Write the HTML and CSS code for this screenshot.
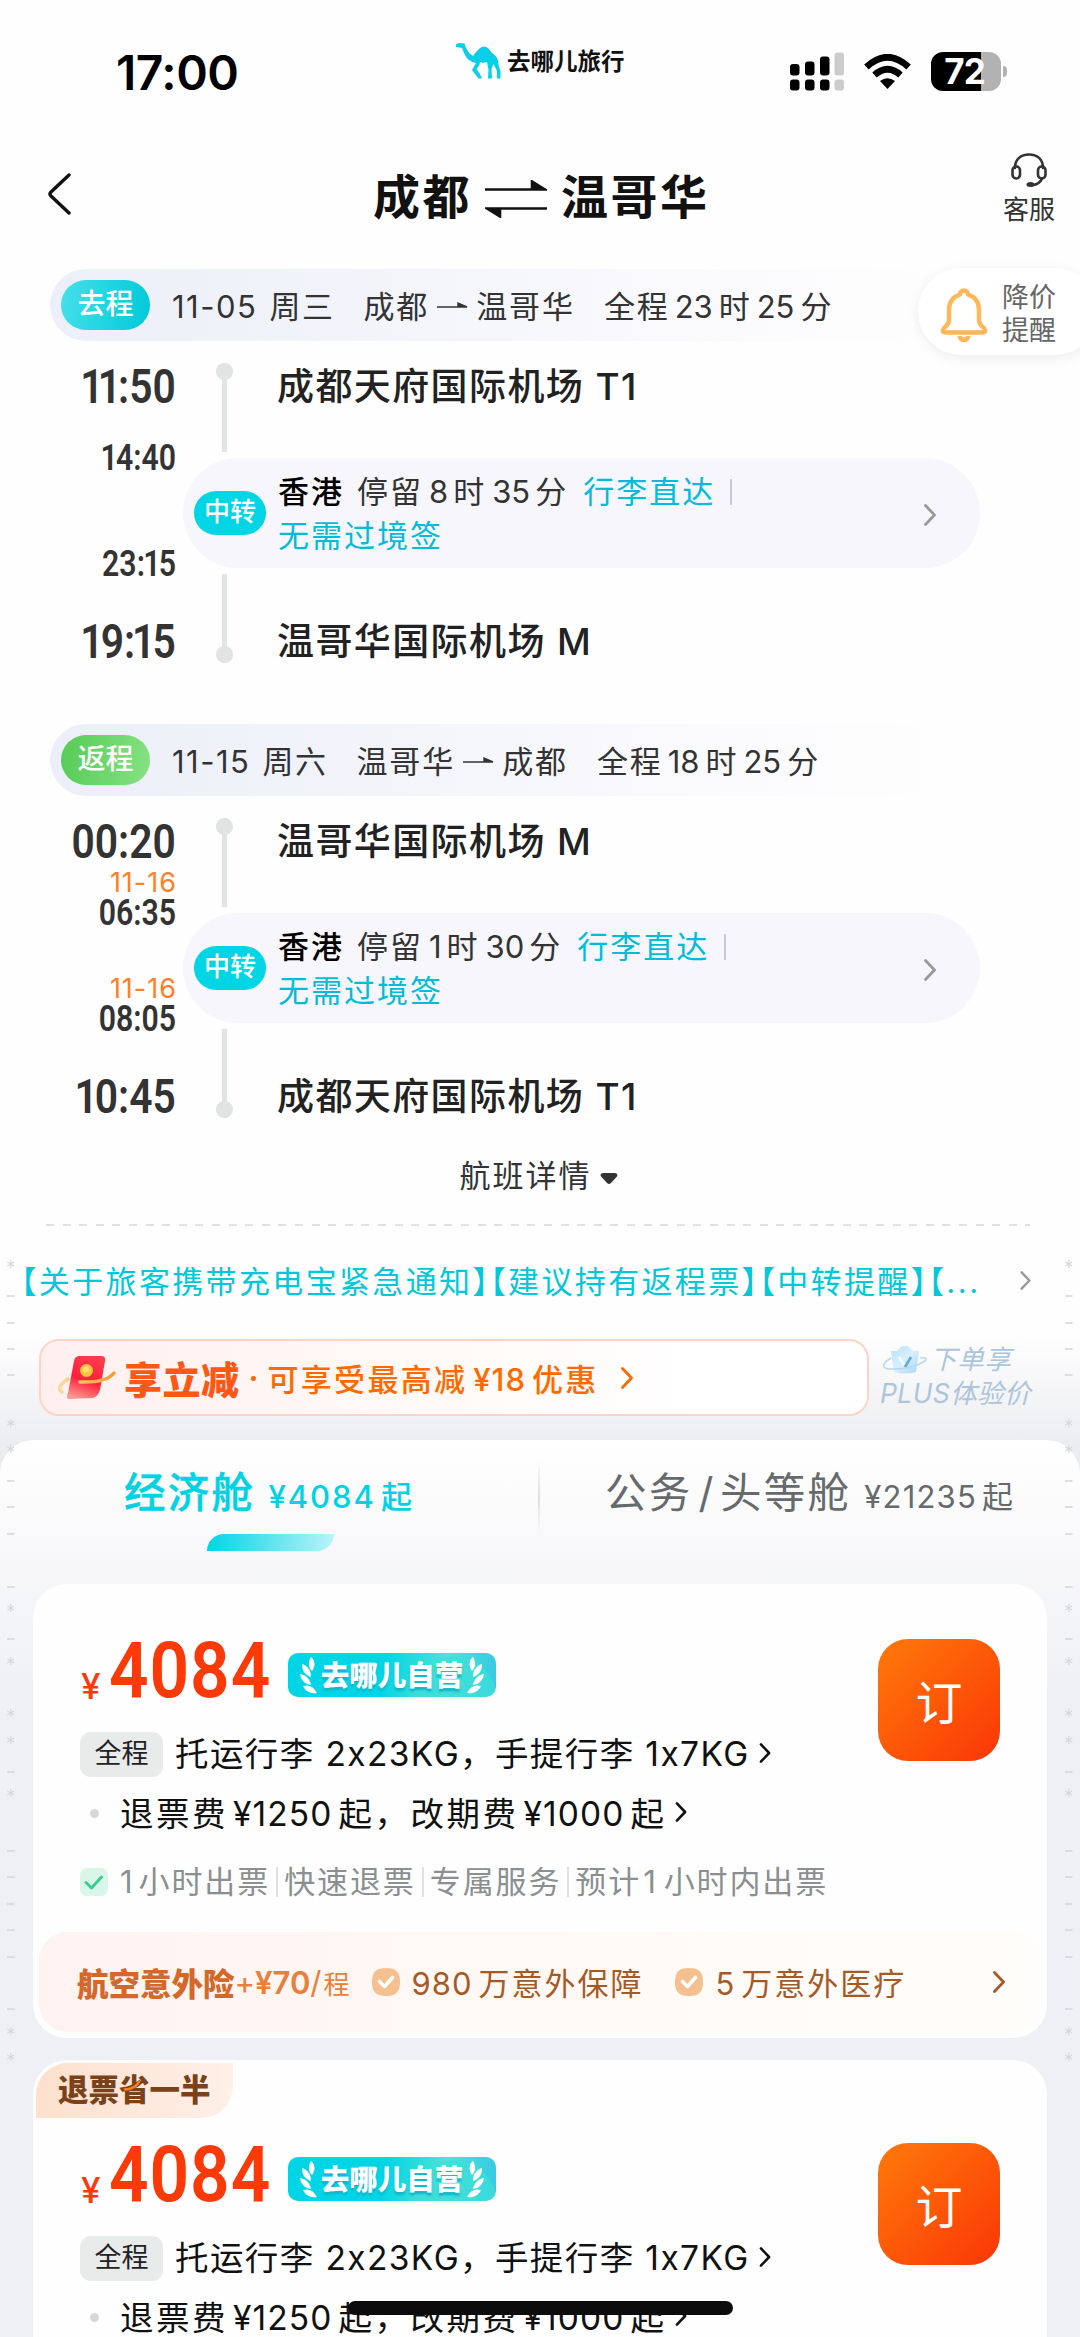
FILE: index.html
```html
<!DOCTYPE html>
<html lang="zh-CN">
<head>
<meta charset="utf-8">
<title>成都 温哥华 航班</title>
<link rel="stylesheet" href="styles.css">
</head>
<body>
<svg class="defs" width="0" height="0" aria-hidden="true">
  <defs>
    <symbol id="chev" viewBox="0 0 12 22"><path d="M1.5 1.5 10.5 11 1.5 20.5" fill="none" stroke="currentColor" stroke-width="2.8" stroke-linecap="round" stroke-linejoin="round"/></symbol>
    <symbol id="arrow" viewBox="0 0 32 10"><path d="M0 7H30L21 3V7" fill="currentColor" stroke="currentColor" stroke-width="1.4"/></symbol>
    <symbol id="laurel" viewBox="0 0 18 38"><g fill="#fff"><path d="M11 1c5 4 4 10 1 14-4-4-4-9-1-14z"/><path d="M2 8c6 2 9 6 9 13-6-2-9-6-9-13z"/><path d="M0 18c6 1 10 5 11 11-6-1-10-4-11-11z"/><path d="M3 30c6-2 11 1 14 7-6 1-11-1-14-7z"/></g></symbol>
    <symbol id="okround" viewBox="0 0 28 28"><path d="M14 0C24 0 28 4 28 14s-4 14-14 14S0 24 0 14 4 0 14 0z" fill="#f5c090"/><path d="M7.5 13.5 12.5 18.5 20.5 9.5" fill="none" stroke="#fff" stroke-width="3.6" stroke-linecap="round" stroke-linejoin="round"/></symbol>
    <symbol id="dash" viewBox="0 0 8 10"><path d="M0 5h7.5" stroke="#d6d8da" stroke-width="1.6"/></symbol>
    <symbol id="star" viewBox="0 0 8 10"><path d="M3.8 1v8M.4 3l6.8 4M.4 7l6.8-4" stroke="#d6d8da" stroke-width="1.2"/></symbol>
    <g id="marks">
      <use href="#star" x="0" y="0" width="8" height="10"/><use href="#dash" y="32" width="8" height="10"/><use href="#dash" y="59" width="8" height="10"/><use href="#dash" y="85" width="8" height="10"/><use href="#dash" y="111" width="8" height="10"/>
      <use href="#star" y="159" width="8" height="10"/><use href="#star" y="185" width="8" height="10"/><use href="#dash" y="217" width="8" height="10"/><use href="#dash" y="243" width="8" height="10"/><use href="#dash" y="270" width="8" height="10"/>
      <use href="#dash" y="323" width="8" height="10"/><use href="#star" y="344" width="8" height="10"/><use href="#dash" y="375" width="8" height="10"/><use href="#star" y="397" width="8" height="10"/><use href="#star" y="449" width="8" height="10"/><use href="#star" y="476" width="8" height="10"/><use href="#dash" y="508" width="8" height="10"/><use href="#star" y="529" width="8" height="10"/>
      <use href="#dash" y="587" width="8" height="10"/><use href="#dash" y="613" width="8" height="10"/><use href="#dash" y="640" width="8" height="10"/><use href="#dash" y="666" width="8" height="10"/><use href="#dash" y="693" width="8" height="10"/><use href="#dash" y="745" width="8" height="10"/><use href="#star" y="767" width="8" height="10"/><use href="#star" y="793" width="8" height="10"/>
    </g>
    <linearGradient id="env" x1="0.6" y1="0" x2="0.3" y2="1"><stop offset="0" stop-color="#ff3a4c"/><stop offset=".55" stop-color="#ff1f3c"/><stop offset="1" stop-color="#ff9a92"/></linearGradient>
    <linearGradient id="ring" x1="0" x2="1"><stop offset="0" stop-color="#ffd9a0"/><stop offset="1" stop-color="#f39a2e"/></linearGradient>
    <linearGradient id="crown" x1="0" x2="1" y2="1"><stop offset="0" stop-color="#b5e0fa"/><stop offset=".5" stop-color="#d9f0fd"/><stop offset="1" stop-color="#a9d4f6"/></linearGradient>
  </defs>
</svg>

<main class="screen">
  <header class="status">
    <span class="clock">17:00</span>
    <span class="brand">
      <svg class="camel" viewBox="0 0 46 36"><path fill="#08cfe8" d="M1 1.500 4 0 9.500 .500 10.500 4 14 10 18 13 21 9 25 5Q29 2 33 5L37 10Q42 13 43 18L44 24 45.500 28 45.500 35.500 42 35.500 42 28 38.500 21 36.500 26 37 35.500 33 35.500 33.500 27 32 19Q28 20.500 25 19L24.500 22 21.500 26 25 31 27 35.500 23.500 35.500 17 27 21 20Q13 18.500 10 12L7 5 1 4z"/></svg>
      <span class="brand-name">去哪儿旅行</span>
    </span>
    <span class="indicators">
      <svg class="signal" viewBox="0 0 54 38"><g fill="#000"><rect y="11.500" width="9.500" height="11.500" rx="3"/><rect x="15" y="9" width="9.500" height="14" rx="3"/><rect x="30" y="4" width="9.500" height="19" rx="3"/><rect y="27" width="9.500" height="11" rx="3"/><rect x="15" y="27" width="9.500" height="11" rx="3"/><rect x="30" y="27" width="9.500" height="11" rx="3"/></g><g fill="#ccc"><rect x="44.500" width="9.500" height="23" rx="3"/><rect x="44.500" y="27" width="9.500" height="11" rx="3"/></g></svg>
      <svg class="wifi" viewBox="0 0 47 35"><g fill="none" stroke="#000" stroke-width="6.600"><path d="M2.400 13Q23.500-6.500 44.600 13"/><path d="M10.500 21Q23.500 9.500 36.500 21"/></g><path d="M16 27Q23.500 21.500 31 27L23.500 35z"/></svg>
      <span class="battery">72</span>
    </span>
  </header>

  <nav class="titlebar">
    <svg class="back" viewBox="0 0 24 42"><path d="M22 2 4 19Q2 21 4 23L22 40" fill="none" stroke="#111" stroke-width="3.400" stroke-linecap="round"/></svg>
    <h1 class="route"><span>成都</span><svg viewBox="0 0 62 38"><path d="M0 9.500H60L47 1.500V9M62 28.500H2L15 36.500V29" fill="#111" stroke="#111" stroke-width="2.600"/></svg><span>温哥华</span></h1>
    <span class="service">
      <svg viewBox="0 0 36 34"><g fill="none" stroke="#333" stroke-width="2.600" stroke-linecap="round"><path d="M4 15C4 6 10 1.500 18 1.500S32 6 32 15"/><rect x="1.500" y="13.500" width="7.500" height="12" rx="3.700"/><rect x="27" y="13.500" width="7.500" height="12" rx="3.700"/><path d="M31 25.500Q29 31 21 32.300"/></g><ellipse cx="19.500" cy="31.500" rx="4" ry="2.500" fill="#333"/></svg>
      <span>客服</span>
    </span>
  </nav>

  <aside class="remind">
    <svg viewBox="0 0 48 54"><g fill="none" stroke="#ffb757" stroke-width="4.400" stroke-linejoin="round"><path d="M20 6.500a4 4 0 0 1 8 0Q39 10 39 22V32Q39 36 44 40 47 44.500 42 44.500H6Q1 44.500 4 40 9 36 9 32V22Q9 10 20 6.500z"/></g><path d="M17.500 48a6.500 6.500 0 0 0 13 0h-4.200a2.500 2 0 0 1-4.600 0z" fill="#ffb757"/></svg>
    <span>降价<br>提醒</span>
  </aside>

  <section class="leg">
    <div class="leg-head">
      <span class="pill go">去程</span>
      <span>11-05<b class="sp"></b>周三</span>
      <span class="pair">成都<svg class="to"><use href="#arrow"/></svg>温哥华</span>
      <span>全程<i>23</i>时<i>25</i>分</span>
    </div>
    <div class="leg-body">
      <div class="times">
        <span class="big"><b>1</b><b>1</b>:50</span>
        <span class="mid"><span><b>1</b>4:40</span></span>
        <span class="mid second"><span>23:<b>1</b>5</span></span>
        <span class="big last"><b>1</b>9:<b>1</b>5</span>
      </div>
      <div class="stops">
        <div class="stop dep"><span class="axis"></span><span class="airport">成都天府国际机场 T1</span></div>
        <div class="transfer">
          <span class="badge">中转</span>
          <p class="info"><strong>香港</strong><span class="stay">停留<i>8</i>时<i class="wide">35</i>分</span><em>行李直达</em><span class="rule"></span><br><em class="visa">无需过境签</em></p>
          <svg class="more"><use href="#chev"/></svg>
        </div>
        <div class="stop arr"><span class="axis"></span><span class="airport">温哥华国际机场 M</span></div>
      </div>
    </div>
  </section>

  <section class="leg">
    <div class="leg-head">
      <span class="pill ret">返程</span>
      <span>11-15<b class="sp"></b>周六</span>
      <span class="pair">温哥华<svg class="to"><use href="#arrow"/></svg>成都</span>
      <span>全程<i>18</i>时<i>25</i>分</span>
    </div>
    <div class="leg-body">
      <div class="times">
        <span class="big">00:20</span>
        <span class="mid"><small>11-16</small><span>06:35</span></span>
        <span class="mid second"><small>11-16</small><span>08:05</span></span>
        <span class="big last"><b>1</b>0:45</span>
      </div>
      <div class="stops">
        <div class="stop dep"><span class="axis"></span><span class="airport">温哥华国际机场 M</span></div>
        <div class="transfer">
          <span class="badge">中转</span>
          <p class="info"><strong>香港</strong><span class="stay">停留<i>1</i>时<i class="wide">30</i>分</span><em>行李直达</em><span class="rule"></span><br><em class="visa">无需过境签</em></p>
          <svg class="more"><use href="#chev"/></svg>
        </div>
        <div class="stop arr"><span class="axis"></span><span class="airport">成都天府国际机场 T1</span></div>
      </div>
    </div>
  </section>

  <div class="details">航班详情<svg viewBox="0 0 18 11"><path d="M3 0H15Q19 1 16.500 4L11 10Q9 12 7 10L1.500 4Q-1 1 3 0z" fill="#333"/></svg></div>
  <div class="dashes"></div>

  <div class="notice"><span class="notice-text">【关于旅客携带充电宝紧急通知】【建议持有返程票】【中转提醒】【<span class="dots">...</span></span><svg class="more"><use href="#chev"/></svg></div>

  <div class="promo-row">
    <div class="promo">
      <svg class="gift" viewBox="0 0 58 43"><path d="M22 0H43Q48 0 47 5L42 34Q40 41 34 42L12 43Q7 43 10 37L16 5Q17 0 22 0z" fill="url(#env)"/><path d="M10 23Q-3 32 4 36M22 26Q48 27 56 17" fill="none" stroke="url(#ring)" stroke-width="3.500" stroke-linecap="round"/><circle cx="28.500" cy="14.500" r="6.500" fill="#ffc33c"/><circle cx="28" cy="13.500" r="3" fill="#ffe27c"/></svg>
      <strong>享立减</strong><span class="dot">·</span><span class="offer">可享受最高减<i>¥18</i>优惠</span><svg class="more"><use href="#chev"/></svg>
    </div>
    <div class="plus">
      <span class="plus-top"><svg viewBox="0 0 45 28"><path d="M8 5 14 5 19 0H25L30 5H36L33 26Q22 29 11 26z" fill="url(#crown)"/><path d="M16 11 21 19" fill="none" stroke="#f2fbff" stroke-width="3"/><path d="M22 21 28 11" fill="none" stroke="#5fa9e4" stroke-width="2.600"/><path d="M8 12Q-6 21 6 23 28 24 42 15 46 11 37 12" fill="none" stroke="#b7d9f0" stroke-width="1.500"/></svg>下单享</span>
      <span class="plus-sub">PLUS体验价</span>
    </div>
  </div>

  <section class="sheet">
    <div class="tabs">
      <div class="tab on"><span class="cabin">经济舱</span><span class="from"><i>¥4084</i>起</span></div>
      <div class="tab off"><span class="cabin">公务<b>/</b>头等舱</span><span class="from"><i>¥21235</i>起</span></div>
    </div>

    <article class="card">
      <div class="fare">
        <div class="fare-main">
          <div class="price-row"><span class="yen">¥</span><span class="price">4084</span><span class="self"><svg><use href="#laurel"/></svg><b>去哪儿自营</b><svg class="flip"><use href="#laurel"/></svg></span></div>
          <div class="line bag"><span class="tag">全程</span><span class="what">托运行李 2x23KG，手提行李 1x7KG</span><svg class="more"><use href="#chev"/></svg></div>
          <div class="line fee"><span class="bullet"></span><span class="what">退票费<i>¥1250</i>起，改期费<i>¥1000</i>起</span><svg class="more"><use href="#chev"/></svg></div>
        </div>
        <button class="book">订</button>
      </div>
      <div class="perks"><svg viewBox="0 0 28 28"><rect width="28" height="28" rx="7" fill="#d9f6e9"/><path d="M6 14.500 11.500 20 21.500 9" fill="none" stroke="#2fcf8c" stroke-width="2.800" stroke-linecap="round" stroke-linejoin="round"/></svg><span><i>1</i>小时出票</span><span>快速退票</span><span>专属服务</span><span>预计<i class="in">1</i>小时内出票</span></div>
      <div class="insure">
        <strong>航空意外险</strong><span class="cost">+<b>¥70</b>/<small>程</small></span>
        <svg class="ok ok-a"><use href="#okround"/></svg><span class="cover"><i>980</i>万意外保障</span>
        <svg class="ok ok-b"><use href="#okround"/></svg><span class="cover"><i>5</i>万意外医疗</span>
        <svg class="more"><use href="#chev"/></svg>
      </div>
    </article>

    <article class="card second-card">
      <span class="ribbon">退票省一半<svg viewBox="0 0 24 14"><path d="M0 10Q14 11 21 0L24 1Q19 12 2 14z" fill="#ff7f1f"/></svg></span>
      <div class="fare">
        <div class="fare-main">
          <div class="price-row"><span class="yen">¥</span><span class="price">4084</span><span class="self"><svg><use href="#laurel"/></svg><b>去哪儿自营</b><svg class="flip"><use href="#laurel"/></svg></span></div>
          <div class="line bag"><span class="tag">全程</span><span class="what">托运行李 2x23KG，手提行李 1x7KG</span><svg class="more"><use href="#chev"/></svg></div>
          <div class="line fee"><span class="bullet"></span><span class="what">退票费<i>¥1250</i>起，改期费<i>¥1000</i>起</span><svg class="more"><use href="#chev"/></svg></div>
        </div>
        <button class="book">订</button>
      </div>
    </article>
  </section>

  <svg class="marks left" viewBox="0 0 8 806"><use href="#marks"/></svg>
  <svg class="marks right" viewBox="0 0 8 806"><use href="#marks"/></svg>
  <div class="home-bar"></div>
</main>
</body>
</html>
```
FILE: styles.css
```css
* { box-sizing: border-box; margin: 0; padding: 0; }
body { background: #fff; font-family: Inter, "Noto Sans CJK SC", sans-serif; color: #333; }
i, em { font-style: normal; }
svg { display: block; flex: none; }
.defs { position: absolute; }

.screen { position: relative; width: 1080px; height: 2337px; overflow: hidden; background: linear-gradient(#fefefe 1335px, #ebecf0 1450px, #eff0f5 1700px); white-space: nowrap; }

/* status bar */
.status { display: flex; height: 120px; padding-left: 116px; }
.clock { width: 339px; padding-top: 43px; font-size: 48px; line-height: 60px; font-weight: 600; color: #000; letter-spacing: -.5px; }
.brand { display: flex; width: 335px; padding-top: 43px; }
.camel { width: 46px; height: 36px; }
.brand-name { margin-left: 6px; font-size: 23.5px; line-height: 37px; font-weight: 700; color: #111; }
.indicators { display: flex; padding-top: 52px; }
.signal { width: 54px; height: 39px; }
.wifi { width: 47px; height: 35px; margin: 2px 20px 0; }
.battery { position: relative; width: 70px; height: 39px; border-radius: 12px; background: linear-gradient(90deg, #000 50px, #b2b2b2 50px); color: #fff; font-size: 35px; line-height: 39px; font-weight: 700; text-align: center; padding-right: 3px; letter-spacing: -1px; }
.battery::after { content: ""; position: absolute; left: 72px; top: 14px; width: 4px; height: 11px; border-radius: 0 4px 4px 0; background: #b2b2b2; }

/* title bar */
.titlebar { display: flex; height: 149px; }
.back { width: 24px; height: 42px; margin: 53px 0 0 47px; }
.route { display: flex; margin: 42px 0 0 302px; width: 631px; font-size: 47px; line-height: 70px; font-weight: 700; color: #111; letter-spacing: 2.5px; }
.route svg { width: 62px; height: 38px; margin: 18px 14px 0 13px; }
.service { display: flex; flex-direction: column; align-items: center; padding-top: 33px; width: 50px; font-size: 26px; line-height: 36px; }
.service svg { width: 36px; height: 34px; margin-bottom: 5px; }

.remind { position: absolute; left: 918px; top: 268px; width: 180px; height: 87px; border-radius: 44px; background: #fff; display: flex; padding: 20px 0 0 22px; font-size: 27px; line-height: 33px; color: #666; box-shadow: 0 3px 14px rgba(0, 0, 0, .07); }
.remind svg { width: 48px; height: 54px; margin-right: 14px; }
.remind span { margin-top: -7px; }

/* flight legs */
.leg + .leg { margin-top: 61px; }
.leg-head { display: flex; align-items: center; margin-left: 50px; width: 900px; height: 72px; padding-left: 11px; border-radius: 36px; background: linear-gradient(90deg, #eceff9 , #f3f4fa 35%, #fafafd 70%, #fefefe 100%); font-size: 31px; letter-spacing: 1.9px; }
.leg-head > span { margin-top: -2px; }
.leg-head > .pill { margin-top: 0; }
.leg-head > span + span { margin-left: 29px; }
.leg-head > .pill + span { margin-left: 22px; letter-spacing: 1.5px; }
.sp { display: inline-block; width: 12px; }
.leg-head i { margin: 0 6px 0 5px; letter-spacing: 0; }
.pair { display: flex; align-items: center; }
.to { width: 32px; height: 10px; margin: 2px 7px 0 8px; color: #333; }
.pill { width: 89px; height: 50px; border-radius: 25px; color: #fff; font-size: 28px; line-height: 49px; font-weight: 500; text-align: center; letter-spacing: 0; }
.go { background: linear-gradient(100deg, #45e0ea, #00c9da); }
.ret { background: linear-gradient(100deg, #56cb56, #86e284); }
.leg-body { display: grid; grid-template-columns: 176px 1fr; height: 322px; }
.times { display: flex; flex-direction: column; align-items: flex-end; padding-top: 21px; font-family: Roboto, sans-serif; }
.times span { transform-origin: right; }
.times b { font-weight: inherit; margin: 0 -3.5px; }
.big { height: 50px; font-size: 48px; line-height: 50px; font-weight: 600; transform: scaleX(.85); }
.mid { display: flex; flex-direction: column; justify-content: flex-end; align-items: flex-end; height: 61px; }
.mid span { font-size: 36px; line-height: 30px; font-weight: 600; transform: scaleX(.84); }
.mid b { margin: 0 -2px; }
.mid small { font: 400 27px/30px Inter, sans-serif; letter-spacing: 1px; margin-right: -1px; color: #ff7e28; }
.second { margin: 45px 0 38px; }
.stop { display: flex; padding-left: 40px; }
.dep { height: 117px; }
.arr { margin-top: 6px; }
.axis { position: relative; width: 17px; height: 89px; background: radial-gradient(circle at 8.500px 8.500px, #e1e4e5 8px, transparent 9px), linear-gradient(#e1e4e5, #e1e4e5) 6px 0 / 5px 100% no-repeat; }
.dep .axis { margin-top: 22px; }
.arr .axis { transform: scaleY(-1); }
.airport { margin: 21px 0 0 44px; font-size: 37px; line-height: 50px; font-weight: 500; color: #222; letter-spacing: 1.4px; }
.arr .airport { margin-top: 43px; }
.transfer { display: flex; align-items: center; margin-left: 7px; width: 797px; height: 110px; border-radius: 55px; padding-left: 11px; background: #f6f6fc; }
.badge { width: 72px; height: 44px; border-radius: 22px; background: #00d5e6; color: #fff; font-size: 26px; line-height: 42px; font-weight: 500; text-align: center; }
.info { width: 646px; margin: 1px 0 0 12px; font-size: 31px; line-height: 44px; letter-spacing: 2px; }
.info strong { font-weight: 500; color: #000; }
.stay { margin: 0 15px 0 13px; }
.stay i { margin: 0 5px 0 6px; letter-spacing: 0; }
.info em { color: #00bcd9; }
.rule { display: inline-block; width: 2px; height: 26px; margin-left: 15px; background: #c5cad3; vertical-align: -2px; }
.transfer .more { width: 12px; height: 22px; color: #999; margin-top: 4px; }

.details { display: flex; justify-content: center; margin-top: 38px; padding-right: 3px; font-size: 31px; line-height: 40px; letter-spacing: 2px; }
.details svg { width: 18px; height: 11px; margin: 17px 0 0 8px; }
.dashes { margin: 28px 50px 0 46px; height: 2px; background: repeating-linear-gradient(90deg, #dfe2e2 0 8px, transparent 8px 16.600px); }

.notice { display: flex; margin: 30px 0 0 21px; height: 48px; align-items: center; color: #00c8d8; font-size: 31px; letter-spacing: 2.350px; }
.notice-text { width: 999px; margin-top: -1px; font-feature-settings: "halt"; }
.dots { letter-spacing: 2.500px; }
.notice .more { width: 11px; height: 19px; color: #999; }

.promo-row { display: flex; margin: 35px 0 0 39px; height: 77px; }
.promo { display: flex; align-items: center; width: 830px; height: 77px; border: 2px solid #ffd4c4; border-radius: 20px; background: linear-gradient(90deg, #fff0ef, #fffaf8 50%, #fff 80%); padding-left: 17px; color: #ff6a00; }
.gift { width: 58px; height: 43px; }
.promo strong { margin-left: 8px; font-size: 38px; font-weight: 900; color: #ff5714; letter-spacing: .5px; }
.dot { width: 28px; text-align: center; font-weight: 700; font-size: 30px; }
.offer { font-size: 31px; font-weight: 500; letter-spacing: 2.3px; }
.offer i { margin: 0 6px; letter-spacing: 1px; }
.promo .more { width: 12px; height: 22px; margin-left: 22px; }
.plus { margin-left: 11px; color: #adc5da; font-size: 26.500px; line-height: 34px; font-style: italic; }
.plus-top { display: flex; height: 34px; padding-left: 3px; margin-top: 3px; letter-spacing: .8px; }
.plus-top svg { width: 45px; height: 28px; margin: 4px 2px 0 0; }
.plus-sub { letter-spacing: .4px; display: block; }

/* cabin sheet */
.sheet { margin-top: 24px; border-radius: 34px 34px 0 0; background: linear-gradient(#fff, #fbfbfc 60px, #eff0f5 260px); height: 900px; }
.tabs { display: grid; grid-template-columns: 538px 542px; height: 144px; background: linear-gradient(transparent, #dcdee0 50%, transparent) 538px 20px / 2px 74px no-repeat; }
.tab { position: relative; display: flex; align-items: baseline; padding-top: 21px; line-height: 64px; }
.on { padding-left: 124px; color: #00d2e4; font-weight: 500; }
.on .cabin { -webkit-text-stroke: .4px; }
.on::after { content: ""; position: absolute; left: 207px; top: 94px; width: 127px; height: 17px; border-radius: 17px 0 17px 0; background: linear-gradient(90deg, #00d5e6, #b9f4f8); }
.off { padding-left: 67px; color: #666a6c; }
.cabin { font-size: 41.500px; letter-spacing: 2.3px; }
.cabin b { font-weight: 400; margin: 0 4px 0 6px; }
.from { font-size: 31px; margin-left: 13px; }
.from i { margin-right: 5px; letter-spacing: 1.2px; }
.on .from i { letter-spacing: 2px; }

.card { position: relative; width: 1014px; height: 454px; margin-left: 33px; border-radius: 34px; background: #fefefe; overflow: hidden; padding: 55px 0 0 47px; }
.second-card { margin-top: 22px; padding-top: 83px; }
.fare { display: flex; }
.fare-main { width: 798px; }
.book { width: 122px; height: 122px; border: 0; border-radius: 30px; background: linear-gradient(135deg, #ff7a0a, #fb3606); color: #fff; font: 400 47px/116px "Noto Sans CJK SC", sans-serif; }
.price-row { display: flex; height: 60px; color: #fb3a08; font-family: Roboto, sans-serif; }
.yen { width: 29px; padding-left: 1px; font: 500 35px/40px Inter, sans-serif; padding-top: 27px; }
.price { width: 179px; font-size: 78px; line-height: 63px; font-weight: 600; letter-spacing: 1px; transform: scaleX(.89); transform-origin: left; }
.self { display: flex; align-items: center; justify-content: center; gap: 3px; width: 208px; height: 44px; margin-top: 14px; border-radius: 10px; color: #fff; font: 700 28.500px/44px "Noto Sans CJK SC", sans-serif; background: radial-gradient(circle at 165px 48px, rgba(60, 222, 218, .8) 0 44px, transparent 45px), linear-gradient(100deg, #00d5e6 45%, #4fe3d4 75%, #32c8e6 100%); text-shadow: 0 3px 2px #16b5c8; }
.self b { margin-top: -3px; }
.self svg { width: 18px; height: 38px; }
.flip { transform: scaleX(-1); }
.line { display: flex; align-items: center; height: 46px; font-size: 33.500px; color: #111; }
.bag { margin-top: 32px; letter-spacing: 1.400px; }
.bag .what { margin: -6px 0 0 12px; }
.fee { margin-top: 13px; letter-spacing: 2.500px; }
.fee .what { margin-top: -3px; }
.tag { width: 83px; height: 45px; border-radius: 11px; background: #e9eaea; color: #222; font-size: 27px; line-height: 43px; text-align: center; letter-spacing: 0; }
.line .more { width: 12px; height: 20px; margin: -3px 0 0 9px; }
.fee i { margin: 0 6px 0 5px; letter-spacing: 1.100px; }
.bullet { width: 9px; height: 9px; border-radius: 50%; background: #d5d8d8; margin: 0 21px 0 10px; }
.perks { display: flex; align-items: center; margin-top: 24px; height: 44px; font-size: 31px; letter-spacing: 1.900px; color: #8b8f90; }
.perks svg { width: 28px; height: 28px; margin-right: 5px; }
.perks span { padding: 0 6px 0 7px; line-height: 30px; }
.perks span + span { border-left: 2px solid #e0e2e2; padding-left: 6px; }
.perks i { margin-right: 4px; }
.perks .in { margin: 0 6px 0 2px; }
.insure { display: flex; align-items: center; width: 1002px; height: 100px; margin: 28px 0 0 -41px; padding-left: 38px; border-radius: 28px; background: linear-gradient(90deg, #fff3f1, #fffaf6 60%, #fffdfb); color: #a55a26; font-size: 31px; }
.insure strong { font-weight: 900; font-size: 31.500px; color: #d4682a; }
.cost { color: #e8803c; width: 137px; font-size: 31px; }
.cost b { font-weight: 600; }
.cost small { font-size: 26px; margin-left: 2px; }
.ok { width: 28px; height: 28px; }
.ok-b { margin-left: 32px; }
.cover { margin: -2px 0 0 12px; letter-spacing: 2px; }
.cover i { margin-right: 6px; letter-spacing: 1px; }
.insure .more { width: 14px; height: 22px; margin-left: 86px; }
.ribbon { position: absolute; left: 3px; top: 3px; width: 197px; height: 55px; padding-left: 22px; border-radius: 32px 0 32px 0; background: linear-gradient(90deg, #fde0cd, #fef0e8); font-size: 30.500px; line-height: 54px; font-weight: 900; color: #79421b; }
.ribbon svg { position: absolute; left: 84px; top: 18px; width: 24px; height: 10px; }

.marks { position: absolute; top: 1259px; width: 8px; height: 806px; }
.left { left: 7px; }
.right { left: 1065px; }
.home-bar { position: absolute; left: 348px; top: 2301px; width: 385px; height: 14px; border-radius: 7px; background: #0c0c0c; }
```
